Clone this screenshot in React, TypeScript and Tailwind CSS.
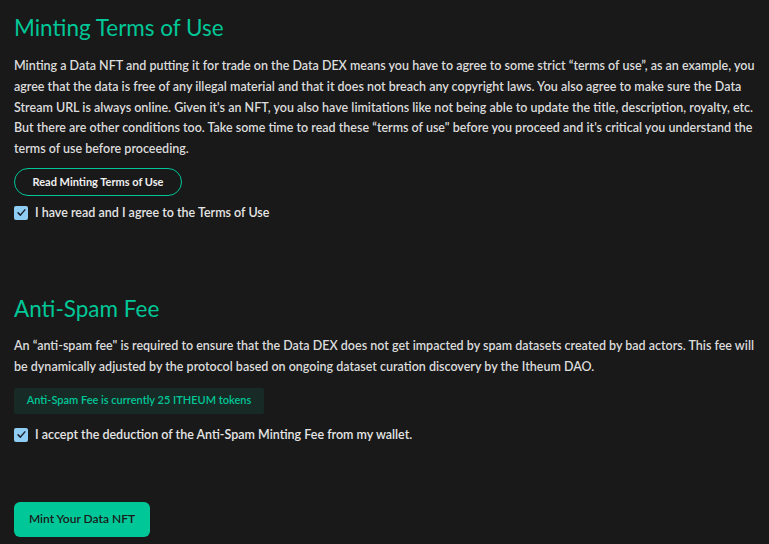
import React from "react";

function Check() {
  return (
    <span className="flex h-[14px] w-[14px] shrink-0 items-center justify-center rounded-[2px] bg-[#90cdf4]">
      <svg viewBox="0 0 12 10" className="h-[9px] w-[9px]" fill="none" stroke="#1a202c" strokeWidth="2" strokeLinecap="round" strokeLinejoin="round">
        <polyline points="1.5 5.5 4.5 8.5 10.5 1.5" />
      </svg>
    </span>
  );
}

export default function App() {
  return (
    <div className="min-h-[544px] w-full bg-[#191919] px-[14px] text-[#e5e5e5]" style={{ fontFamily: "Lato, 'Noto Sans', sans-serif" }}>
      <div className="pt-[13px]">
        <h2 className="text-[22.5px] leading-[30px] text-[#00c797]">Minting Terms of Use</h2>
        <p className="mt-[13px] text-[12.5px] leading-[20.8px] font-semibold text-[#dcdcdc]">
          Minting a Data NFT and putting it for trade on the Data DEX means you have to agree to some strict “terms of use”, as an example, you agree that the data is free of any illegal material and that it does not breach any copyright laws. You also agree to make sure the Data Stream URL is always online. Given it's an NFT, you also have limitations like not being able to update the title, description, royalty, etc. But there are other conditions too. Take some time to read these “terms of use" before you proceed and it's critical you understand the terms of use before proceeding.
        </p>
        <button className="mt-[8px] flex h-[28px] w-[168px] items-center justify-center rounded-full border border-[#00c797] text-[11px] font-bold text-[#f0f0f0]">
          Read Minting Terms of Use
        </button>
        <label className="mt-[10px] flex items-center gap-[7px] text-[12.5px] leading-[14px] font-semibold">
          <Check />
          <span>I have read and I agree to the Terms of Use</span>
        </label>
      </div>
      <div className="pt-[74px]">
        <h2 className="text-[22.5px] leading-[30px] text-[#00c797]">Anti-Spam Fee</h2>
        <p className="mt-[12px] text-[12.5px] leading-[20.8px] font-semibold text-[#dcdcdc]">
          An “anti-spam fee" is required to ensure that the Data DEX does not get impacted by spam datasets created by bad actors. This fee will be dynamically adjusted by the protocol based on ongoing dataset curation discovery by the Itheum DAO.
        </p>
        <div className="mt-[10px] flex h-[26px] w-[250px] items-center justify-center rounded-[2px] bg-[#172a26] text-[11px] font-semibold text-[#00c797]">
          Anti-Spam Fee is currently 25 ITHEUM tokens
        </div>
        <label className="mt-[14px] flex items-center gap-[7px] text-[12.5px] leading-[14px] font-semibold">
          <Check />
          <span>I accept the deduction of the Anti-Spam Minting Fee from my wallet.</span>
        </label>
      </div>
      <button className="mt-[60px] flex h-[35px] w-[136px] items-center justify-center rounded-[6px] bg-[#00c797] text-[12px] font-semibold text-[#1a1a1a]">
        Mint Your Data NFT
      </button>
    </div>
  );
}
